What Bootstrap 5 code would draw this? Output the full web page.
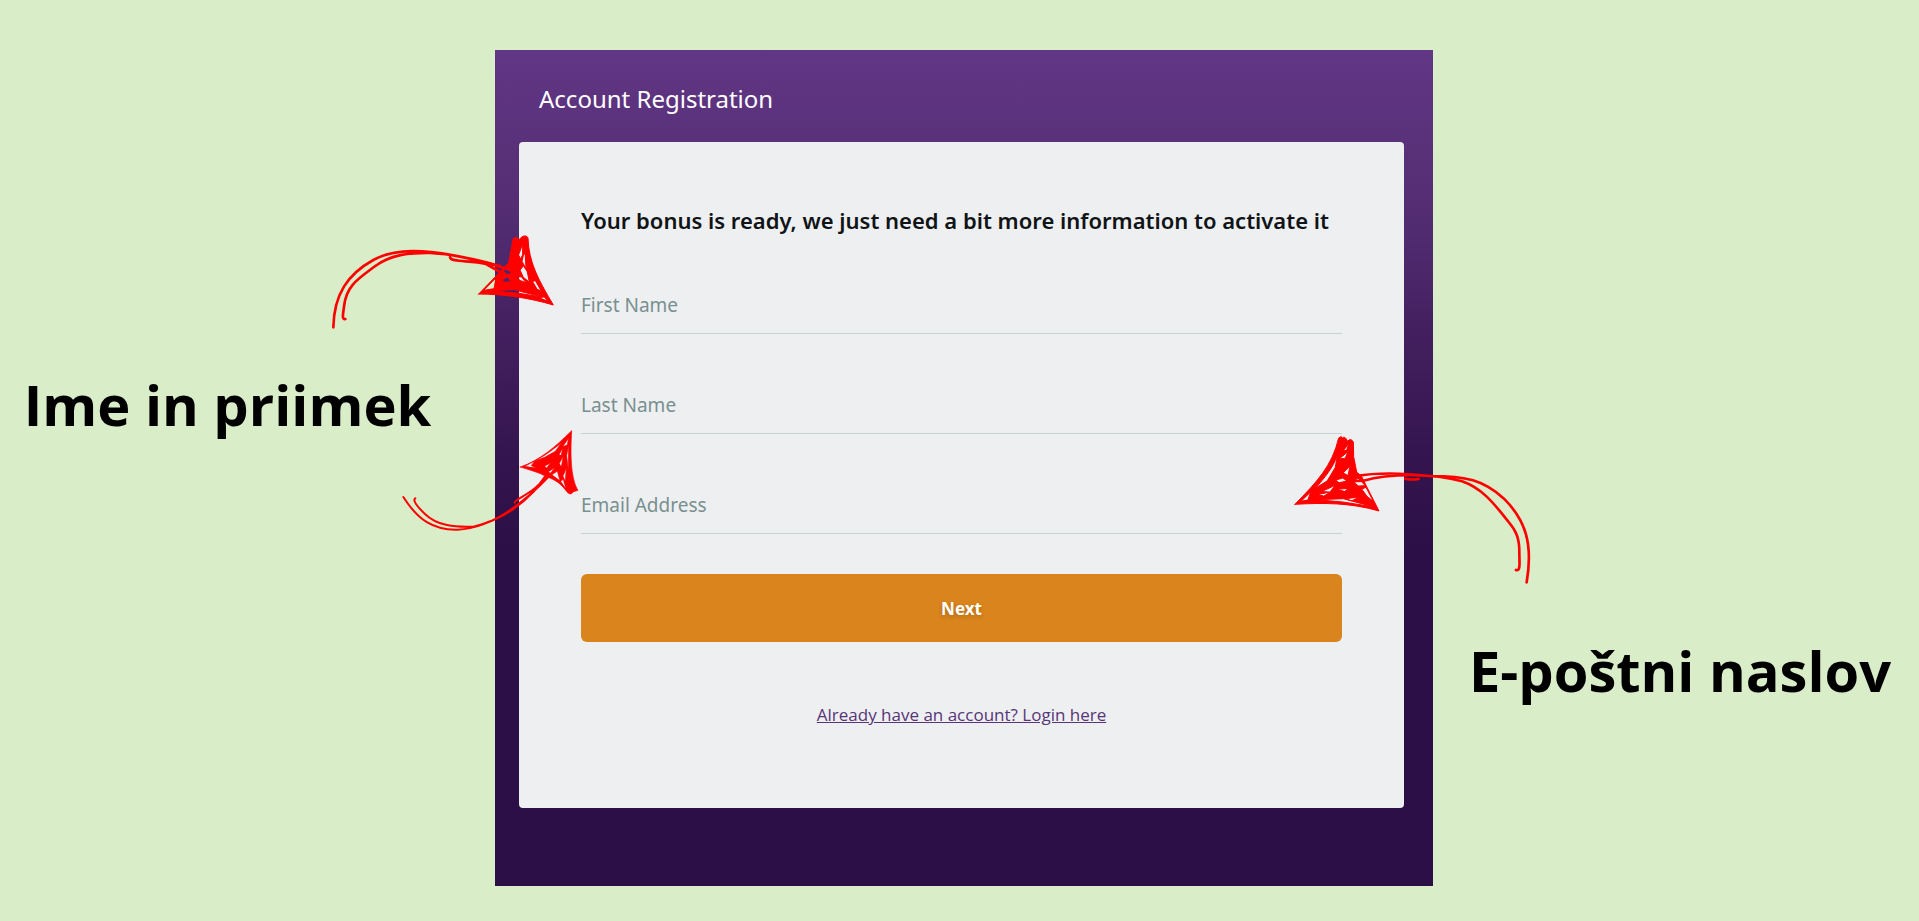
<!DOCTYPE html>
<html lang="sl">
<head>
<meta charset="utf-8">
<meta name="viewport" content="width=device-width, initial-scale=1">
<title>Account Registration</title>
<link href="https://cdn.jsdelivr.net/npm/bootstrap@5.3.0/dist/css/bootstrap.min.css" rel="stylesheet">
<style>
  body { background: #d9edc8; font-family: "Noto Sans", sans-serif; overflow-x: hidden; }
  .guide { display: grid; grid-template-columns: 495fr 938fr 486fr; padding: 50px 0 34px; }
  .panel { background: linear-gradient(#613685 0%, #593179 12%, #512b70 22%, #431f5f 34%, #35154f 48%, #2c0f46 60%); padding: 0 29px 78px 24px; }
  .panel-title { font-size: 24px; line-height: 32px; color: #fff; padding: 33px 20px 27px; }
  .sheet { background: #eeeff1; border-radius: 4px; padding: 62px; }
  .lead-line { font-size: 22px; line-height: 32px; font-weight: 600; color: #101416; margin-bottom: 38px; }
  .field-row { display: grid; margin-bottom: 40px; }
  .field-row > * { grid-area: 1 / 1; }
  .field { height: 60px; padding: 4px 0 0; font-size: 19px; border: 0; border-bottom: 1px solid #c8d2d3; border-radius: 0; background: transparent; }
  .field:focus { background: transparent; box-shadow: none; border-color: #5a3179; }
  .field-label { align-self: center; justify-self: start; padding-top: 2px; font-size: 19px; line-height: 28px; color: #78908f; cursor: text; z-index: 1; }
  .field:not(:placeholder-shown) + .field-label { visibility: hidden; }
  .btn-next { height: 68px; padding-top: 8px; border-radius: 6px; background: #d9841c; color: #fff; font-size: 17px; font-weight: 700; text-shadow: 0 2px 4px rgba(0,0,0,.2); }
  .btn-next:hover { background: #c67615; color: #fff; }
  .login-line { padding: 61px 0 19px; line-height: 24px; }
  .login-link { font-family: "Open Sans", sans-serif; color: #573578; font-size: 17px; }
  .note { font-family: "Open Sans", sans-serif; font-weight: 700; color: #000; font-size: 56px; line-height: 72px; white-space: nowrap; }
  .note-name { padding: 318px 40px 0 0; }
  .note-mail { padding: 584px 0 0 8px; }
  .arrow { position: absolute; z-index: 2; fill: none; stroke: #fe0000; stroke-linecap: round; stroke-linejoin: round; pointer-events: none; }
  .arrow .head { fill: #fe0000; fill-rule: evenodd; }
  .arrow-first { top: 170px; right: -85px; }
  .arrow-last { top: 370px; right: -95px; }
  .arrow-mail { top: 370px; left: -153px; }
</style>
</head>
<body>
<main class="guide">
  <aside class="position-relative text-center">
    <p class="note note-name mb-0">Ime in priimek</p>
    <svg class="arrow arrow-first" width="270" height="130" viewBox="0 0 810 390" stroke-width="8" aria-hidden="true">
      <path d="M70 322C72 222 114 162 190 120C260 82 350 92 430 106C490 116 540 130 600 150M106 297C94 300 100 278 102 260C108 196 148 174 196 138C240 106 290 98 360 99C420 102 500 118 570 138M420 112C424 128 480 120 528 132L592 168"/>
      <path class="head" stroke-width="3" d="M506 222L572 154L596 128L609 58Q618 44 626 60L636 50Q650 44 654 54C656 128 688 184 730 255C660 234 580 222 506 222ZM522 211L552 206L558 174ZM626 104L638 72L638 104L632 116ZM642 98L636 124L648 146L646 108ZM640 138L630 150L640 172L658 186L652 156ZM620 172L634 170L648 188L632 182ZM668 184L676 182L694 213L682 208ZM576 179L594 170L602 185L586 187ZM580 153L594 140L604 160L592 164ZM546 212L612 209L700 232L628 220ZM690 227L702 230L714 243L696 237Z"/>
    </svg>
    <svg class="arrow arrow-last" width="200" height="130" viewBox="0 0 600 390" stroke-width="6" aria-hidden="true">
      <path d="M40 231C84 300 130 331 203 329C298 326 390 260 478 168M76 235C66 240 82 260 104 281C142 318 195 322 250 320C330 302 390 258 432 214L466 168M374 248C374 236 414 228 446 194L484 160"/>
      <path class="head" stroke-width="2" d="M391 141C454 118 494 82 545 32C540 116 544 178 564 211L551 215L543 222Q536 224 528 212C512 190 496 180 470 170C444 156 418 150 391 141ZM404 139L434 123L424 137L440 144ZM436 122C472 103 494 84 514 69L496 94L464 112ZM518 80L536 54L532 74ZM507 104L518 84L514 106ZM464 138L482 129L470 144ZM475 155L494 143L482 160ZM508 130L520 108L514 141ZM519 168L529 144L526 184ZM512 184L520 178L528 206ZM530 106L536 76L535 152ZM486 164L502 153L510 182Z"/>
    </svg>
  </aside>

  <section class="panel">
    <h1 class="panel-title fw-normal mb-0">Account Registration</h1>
    <form class="sheet">
      <h2 class="lead-line mt-0">Your bonus is ready, we just need a bit more information to activate it</h2>
      <div class="field-row">
        <input class="form-control field" id="firstName" type="text" placeholder=" ">
        <label class="field-label" for="firstName">First Name</label>
      </div>
      <div class="field-row">
        <input class="form-control field" id="lastName" type="text" placeholder=" ">
        <label class="field-label" for="lastName">Last Name</label>
      </div>
      <div class="field-row">
        <input class="form-control field" id="email" type="email" placeholder=" ">
        <label class="field-label" for="email">Email Address</label>
      </div>
      <button class="btn btn-next w-100 border-0" type="button">Next</button>
      <p class="login-line text-center mb-0"><a class="login-link" href="#login">Already have an account? Login here</a></p>
    </form>
  </section>

  <aside class="position-relative text-center">
    <p class="note note-mail mb-0">E-poštni naslov</p>
    <svg class="arrow arrow-mail" width="270" height="180" viewBox="0 0 810 540" stroke-width="8" aria-hidden="true">
      <path d="M740 487C760 370 736 300 672 236C610 180 560 168 450 168C380 160 300 156 228 168M708 450C724 456 717 420 718 390C717 350 706 330 686 306C646 256 610 206 546 184C460 160 330 160 250 182L200 184M376 176C390 180 402 179 416 177"/>
      <path class="head" stroke-width="3" d="M45 253C112 184 156 138 176 54Q184 46 188 54Q194 46 203 64Q212 52 220 66L221 110L230 156L244 168L297 273C212 248 128 248 45 253ZM64 243L92 216L84 239ZM108 203C134 172 158 146 172 106L166 142L142 182ZM190 92L207 70L200 90ZM178 116L204 95L196 114ZM190 158L210 139L204 166ZM168 180L188 174L202 183L178 188ZM126 214L166 196L150 216ZM114 223L152 216L132 228ZM172 208L206 205L194 214ZM220 184L234 174L256 197L236 198ZM246 207L258 202L280 244L262 230ZM110 239L190 236L278 260L188 246ZM198 236L238 231L216 242Z"/>
    </svg>
  </aside>
</main>
<script src="https://cdn.jsdelivr.net/npm/bootstrap@5.3.0/dist/js/bootstrap.bundle.min.js"></script>
</body>
</html>
